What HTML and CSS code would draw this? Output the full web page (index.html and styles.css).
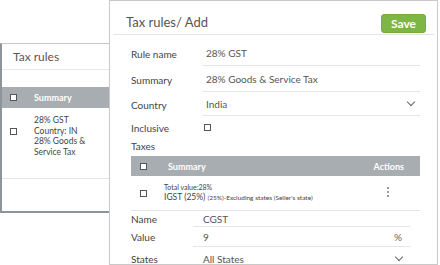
FILE: index.html
```html
<!DOCTYPE html>
<html lang="en">
<head>
  <meta charset="UTF-8" />
  <title>Tax rules | Add</title>
  <link rel="stylesheet" href="styles.css">
</head>
<body>
  <div class="list-card">
    <div class="card-title">Tax rules</div>
    <div class="list-head">
      <span class="check"></span>
      <span>Summary</span>
    </div>
    <div class="list-row">
      <span class="check"></span>
      <div class="row-text">28% GST<br>Country: IN<br>28% Goods &amp;<br>Service Tax</div>
    </div>
  </div>

  <div class="editor">
    <div class="editor-head">
      <h1>Tax rules/ Add</h1>
      <button class="save">Save</button>
    </div>

    <div class="form">
      <div class="field first">
        <label>Rule name</label>
        <div class="input">28% GST</div>
      </div>
      <div class="field">
        <label>Summary</label>
        <div class="input">28% Goods &amp; Service Tax</div>
      </div>
      <div class="field select">
        <label>Country</label>
        <div class="input">India <span class="chevron"></span></div>
      </div>
      <div class="field plain">
        <label>Inclusive</label>
        <span class="check"></span>
      </div>
      <div class="section">Taxes</div>

      <div class="tax-table">
        <div class="tax-head">
          <span class="check"></span>
          <span class="col-summary">Summary</span>
          <span class="col-actions">Actions</span>
        </div>
        <div class="tax-row">
          <span class="check"></span>
          <div class="tax-text">
            <div class="tax-total">Total value:28%</div>
            <div class="tax-line">IGST (25%) <small>(25%)-Excluding states (Seller's state)</small></div>
          </div>
          <span class="kebab"><i></i><i></i><i></i></span>
        </div>
      </div>

      <div class="sub-field">
        <label>Name</label>
        <div class="input">CGST</div>
      </div>
      <div class="sub-field">
        <label>Value</label>
        <div class="input">9 <span class="unit">%</span></div>
      </div>
      <div class="sub-field last">
        <label>States</label>
        <div class="input">All States <span class="chevron"></span></div>
      </div>
    </div>
  </div>
</body>
</html>
```

FILE: styles.css
```css
body {
  font-family: 'Lato', 'Open Sans', sans-serif;
  margin: 0;
  width: 440px;
  height: 265px;
  overflow: hidden;
  position: relative;
  background-color: #fff;
  color: #444;
}
.check {
  display: inline-block;
  width: 5px;
  height: 5px;
  border: 1px solid #555;
  background-color: #fff;
  flex-shrink: 0;
}

/* list behind */
.list-card {
  margin-top: 43px;
  width: 140px;
  height: 170px;
  box-sizing: border-box;
  border-top: 1px solid #c5c8cb;
  border-left: 2px solid #8e959a;
  border-bottom: 2px solid #8e959a;
  background-color: #fff;
}
.card-title {
  height: 25px;
  line-height: 25px;
  padding-left: 11px;
  font-size: 12px;
  color: #585858;
  border-bottom: 1px solid #e8e8e8;
}
.list-head {
  display: flex;
  align-items: center;
  gap: 17px;
  margin-top: 17px;
  height: 21px;
  padding-left: 8px;
  background-color: #a8adb1;
  color: #fff;
  font-size: 9px;
  font-weight: bold;
}
.list-row {
  display: flex;
  align-items: flex-start;
  gap: 17px;
  height: 71px;
  box-sizing: border-box;
  padding: 7px 0 0 8px;
  border-bottom: 1px solid #e4e4e4;
}
.list-row .check {
  margin-top: 13px;
}
.row-text {
  font-size: 8.5px;
  line-height: 10.6px;
  color: #444;
}

/* editor in front */
.editor {
  position: absolute;
  left: 109px;
  top: 0;
  width: 329px;
  height: 265px;
  box-sizing: border-box;
  border: 1px solid #c9c9c9;
  background-color: #fff;
}
.editor-head {
  display: flex;
  justify-content: space-between;
  align-items: center;
  height: 34px;
  box-sizing: border-box;
  margin: 0 3px;
  padding: 9px 8px 0 13px;
  border-bottom: 1px solid #e4e4e4;
}
.editor-head h1 {
  margin: 0;
  font-size: 13px;
  font-weight: normal;
  color: #555;
}
.save {
  margin-top: 2px;
  width: 45px;
  height: 19px;
  padding: 0;
  border: 1px solid #74ad3d;
  border-radius: 3px;
  background-color: #7db644;
  color: #fff;
  font-family: inherit;
  font-size: 12px;
  font-weight: bold;
}
.form {
  padding: 0 17px 0 21px;
  font-size: 10px;
}
.field {
  display: flex;
  align-items: stretch;
  height: 26px;
}
.field.first {
  margin-top: 5px;
}
.field.select {
  height: 24px;
}
.field label {
  width: 71px;
  display: flex;
  align-items: center;
  padding-top: 1px;
  color: #444;
}
.field .input {
  flex: 1;
  display: flex;
  align-items: center;
  justify-content: space-between;
  padding: 1px 6px 0 4px;
  border-bottom: 1px solid #e6e6e6;
  color: #555;
}
.field.plain {
  height: 22px;
  align-items: center;
}
.field.plain .check {
  margin-left: 2px;
}
.section {
  height: 16px;
  line-height: 16px;
  color: #444;
}
.chevron {
  width: 5px;
  height: 5px;
  margin-top: -4px;
  border-right: 1px solid #666;
  border-bottom: 1px solid #666;
  transform: rotate(45deg);
}

.tax-table {
  margin-top: 2px;
}
.tax-head {
  display: flex;
  align-items: center;
  height: 20px;
  padding: 0 16px 0 9px;
  background-color: #a8adb1;
  color: #fff;
  font-size: 9px;
  font-weight: bold;
}
.col-summary {
  margin-left: 21px;
  flex: 1;
}
.tax-row {
  display: flex;
  align-items: center;
  height: 35px;
  box-sizing: border-box;
  padding: 0 0 0 9px;
  border-bottom: 1px solid #e4e4e4;
}
.tax-text {
  flex: 1;
  margin-left: 17px;
  color: #444;
}
.tax-total {
  font-size: 7px;
  line-height: 9px;
}
.tax-line {
  font-size: 8.5px;
  line-height: 10px;
}
.tax-line small {
  font-size: 6.5px;
}
.kebab {
  display: flex;
  flex-direction: column;
  gap: 2px;
  width: 2px;
  margin-right: 31px;
  margin-top: -2px;
}
.kebab i {
  display: block;
  width: 2px;
  height: 2px;
  border-radius: 1px;
  background-color: #777;
}

.sub-field {
  display: flex;
  height: 16px;
}
.sub-field + .sub-field {
  height: 20px;
}
.sub-field.last {
  height: 24px;
}
.sub-field label {
  width: 62px;
  display: flex;
  align-items: center;
  color: #444;
}
.sub-field .input {
  width: 217px;
  display: flex;
  align-items: center;
  justify-content: space-between;
  box-sizing: border-box;
  padding: 0 8px 0 10px;
  border-bottom: 1px solid #e6e6e6;
  color: #555;
}
.sub-field.last .input {
  border-bottom: none;
}
.unit {
  color: #666;
}
```
